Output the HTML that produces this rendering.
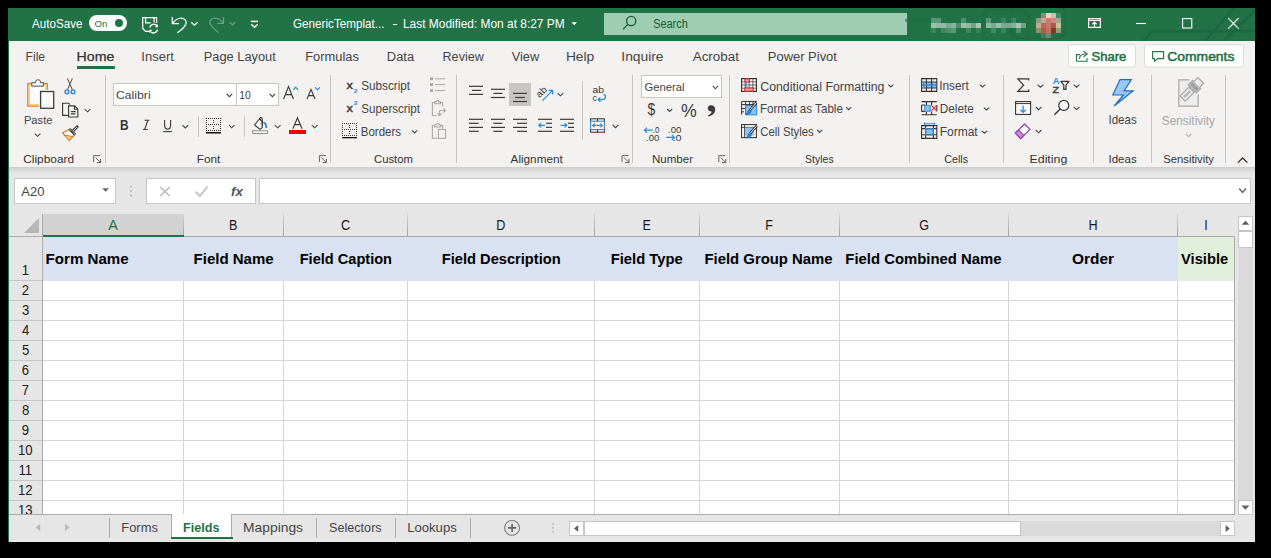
<!DOCTYPE html>
<html><head><meta charset="utf-8"><style>
html,body{margin:0;padding:0;background:#000;overflow:hidden}
svg{display:block}
text{font-family:"Liberation Sans", sans-serif;white-space:pre}
</style></head><body>
<svg width="1271" height="558" viewBox="0 0 1271 558">
<rect x="0" y="0" width="1271" height="558" fill="#000000" />
<rect x="8" y="8" width="1247" height="33" fill="#217346" />
<rect x="8" y="41" width="1247" height="126" fill="#f3f2f1" />
<rect x="8" y="167" width="1247" height="375" fill="#e6e6e6" />
<defs><linearGradient id="sh" x1="0" y1="0" x2="0" y2="1"><stop offset="0" stop-color="#cdcdcd"/><stop offset="1" stop-color="#e6e6e6"/></linearGradient></defs>
<rect x="8" y="167" width="1247" height="6" fill="url(#sh)" />
<rect x="8" y="8" width="1" height="534" fill="#217346" />
<rect x="14" y="178" width="102" height="26" fill="#c6c6c6" />
<rect x="15" y="179" width="100" height="24" fill="#ffffff" />
<rect x="146" y="178" width="110" height="26" fill="#c6c6c6" />
<rect x="147" y="179" width="108" height="24" fill="#ffffff" />
<rect x="259" y="178" width="992" height="26" fill="#c6c6c6" />
<rect x="260" y="179" width="990" height="24" fill="#ffffff" />
<rect x="9" y="214" width="1225" height="22" fill="#e6e6e6" />
<rect x="43" y="214" width="141" height="21" fill="#d2d2d2" />
<defs><linearGradient id="cdiv" x1="0" y1="0" x2="0" y2="1"><stop offset="0" stop-color="#d6d6d6"/><stop offset="1" stop-color="#9e9e9e"/></linearGradient></defs>
<rect x="183" y="214" width="1" height="22" fill="url(#cdiv)" />
<rect x="283" y="214" width="1" height="22" fill="url(#cdiv)" />
<rect x="407" y="214" width="1" height="22" fill="url(#cdiv)" />
<rect x="594" y="214" width="1" height="22" fill="url(#cdiv)" />
<rect x="699" y="214" width="1" height="22" fill="url(#cdiv)" />
<rect x="839" y="214" width="1" height="22" fill="url(#cdiv)" />
<rect x="1008" y="214" width="1" height="22" fill="url(#cdiv)" />
<rect x="1177" y="214" width="1" height="22" fill="url(#cdiv)" />
<rect x="9" y="236" width="1226" height="1" fill="#ababab" />
<rect x="43" y="235" width="141" height="2" fill="#217346" />
<polygon points="24,233 39,233 39,218" fill="#b6b6b6"/>
<clipPath id="gridclip"><rect x="9" y="237" width="33" height="277"/></clipPath>
<rect x="9" y="237" width="33" height="277" fill="#e6e6e6" />
<rect x="42" y="214" width="1" height="300" fill="#ababab" />
<rect x="9" y="280" width="33" height="1" fill="#c6c6c6" />
<rect x="9" y="300" width="33" height="1" fill="#c6c6c6" />
<rect x="9" y="320" width="33" height="1" fill="#c6c6c6" />
<rect x="9" y="340" width="33" height="1" fill="#c6c6c6" />
<rect x="9" y="360" width="33" height="1" fill="#c6c6c6" />
<rect x="9" y="380" width="33" height="1" fill="#c6c6c6" />
<rect x="9" y="400" width="33" height="1" fill="#c6c6c6" />
<rect x="9" y="420" width="33" height="1" fill="#c6c6c6" />
<rect x="9" y="440" width="33" height="1" fill="#c6c6c6" />
<rect x="9" y="460" width="33" height="1" fill="#c6c6c6" />
<rect x="9" y="480" width="33" height="1" fill="#c6c6c6" />
<rect x="9" y="500" width="33" height="1" fill="#c6c6c6" />
<rect x="43" y="237" width="1191" height="277" fill="#ffffff" />
<rect x="43" y="300" width="1191" height="1" fill="#d6d6d6" />
<rect x="43" y="320" width="1191" height="1" fill="#d6d6d6" />
<rect x="43" y="340" width="1191" height="1" fill="#d6d6d6" />
<rect x="43" y="360" width="1191" height="1" fill="#d6d6d6" />
<rect x="43" y="380" width="1191" height="1" fill="#d6d6d6" />
<rect x="43" y="400" width="1191" height="1" fill="#d6d6d6" />
<rect x="43" y="420" width="1191" height="1" fill="#d6d6d6" />
<rect x="43" y="440" width="1191" height="1" fill="#d6d6d6" />
<rect x="43" y="460" width="1191" height="1" fill="#d6d6d6" />
<rect x="43" y="480" width="1191" height="1" fill="#d6d6d6" />
<rect x="43" y="500" width="1191" height="1" fill="#d6d6d6" />
<rect x="183" y="281" width="1" height="233" fill="#d6d6d6" />
<rect x="283" y="281" width="1" height="233" fill="#d6d6d6" />
<rect x="407" y="281" width="1" height="233" fill="#d6d6d6" />
<rect x="594" y="281" width="1" height="233" fill="#d6d6d6" />
<rect x="699" y="281" width="1" height="233" fill="#d6d6d6" />
<rect x="839" y="281" width="1" height="233" fill="#d6d6d6" />
<rect x="1008" y="281" width="1" height="233" fill="#d6d6d6" />
<rect x="1177" y="281" width="1" height="233" fill="#d6d6d6" />
<rect x="43" y="237" width="1135" height="44" fill="#d9e1f2" />
<rect x="1178" y="237" width="56" height="44" fill="#e2efda" />
<rect x="1234" y="236" width="1" height="279" fill="#ababab" />
<rect x="9" y="514" width="1226" height="1" fill="#ababab" />
<rect x="172" y="514" width="59" height="23" fill="#ffffff" />
<rect x="171" y="515" width="1" height="24" fill="#ababab" />
<rect x="231" y="515" width="1" height="24" fill="#ababab" />
<rect x="172" y="514" width="59" height="1" fill="#ffffff" />
<rect x="171" y="537" width="62" height="2" fill="#217346" />
<rect x="109" y="518" width="1" height="20" fill="#ababab" />
<rect x="316" y="518" width="1" height="20" fill="#ababab" />
<rect x="395" y="518" width="1" height="20" fill="#ababab" />
<rect x="470" y="518" width="1" height="20" fill="#ababab" />
<rect x="1238" y="231" width="15" height="270" fill="#dadada" />
<rect x="1238" y="216" width="15" height="15" fill="#c6c6c6" />
<rect x="1239" y="217" width="13" height="13" fill="#ffffff" />
<rect x="1238" y="231" width="15" height="17" fill="#c6c6c6" />
<rect x="1239" y="232" width="13" height="15" fill="#ffffff" />
<rect x="1238" y="500" width="15" height="15" fill="#c6c6c6" />
<rect x="1239" y="501" width="13" height="13" fill="#ffffff" />
<rect x="569" y="521" width="666" height="15" fill="#dadada" />
<rect x="569" y="521" width="15" height="15" fill="#c6c6c6" />
<rect x="570" y="522" width="13" height="13" fill="#ffffff" />
<rect x="584" y="521" width="437" height="15" fill="#c6c6c6" />
<rect x="585" y="522" width="435" height="13" fill="#ffffff" />
<rect x="1220" y="521" width="15" height="15" fill="#c6c6c6" />
<rect x="1221" y="522" width="13" height="13" fill="#ffffff" />
<rect x="105" y="75" width="1" height="88" fill="#c8c6c4" />
<rect x="330" y="75" width="1" height="88" fill="#c8c6c4" />
<rect x="456" y="75" width="1" height="88" fill="#c8c6c4" />
<rect x="632" y="75" width="1" height="88" fill="#c8c6c4" />
<rect x="729" y="75" width="1" height="88" fill="#c8c6c4" />
<rect x="909" y="75" width="1" height="88" fill="#c8c6c4" />
<rect x="1003" y="75" width="1" height="88" fill="#c8c6c4" />
<rect x="1093" y="75" width="1" height="88" fill="#c8c6c4" />
<rect x="1151" y="75" width="1" height="88" fill="#c8c6c4" />
<rect x="1225" y="75" width="1" height="88" fill="#c8c6c4" />
<rect x="604" y="13" width="303" height="22" fill="#9fcdb3" />
<clipPath id="tb"><rect x="8" y="8" width="1247" height="33"/></clipPath>
<g stroke="#1c6a3e" stroke-width="3" fill="none" opacity="0.55" clip-path="url(#tb)"><path d="M905 20.4 H932"/><rect x="1011.5" y="6" width="53.5" height="32" rx="7"/><rect x="983" y="10" width="45" height="36" rx="8"/></g>
<g stroke="#1e6640" stroke-width="2.4" fill="none" clip-path="url(#tb)"><path d="M1142 42 L1152.5 31.2 H1256"/><path d="M1236 6 L1204 42"/><path d="M1257 8 L1223 42"/></g>
<rect x="89" y="15" width="38" height="16" rx="8" fill="#ffffff"/>
<circle cx="119" cy="23" r="4" fill="#217346"/>
<g stroke="#fff" stroke-width="1.25" fill="none" stroke-linejoin="miter"><path d="M149.5 31.4 H145.6 L142.7 28.5 V17.6 H156.6 V23"/><path d="M145.6 17.6 V22.8 H150.6"/><path d="M154.1 17.6 V22.6"/><path d="M149.8 27.6 A4 4 0 0 1 157.2 26.2"/><path d="M157.4 29.6 A4 4 0 0 1 150.0 31.0"/></g><path d="M157.9 24 V27.2 H154.7 Z" fill="#fff"/><path d="M149.3 33 V29.8 H152.5 Z" fill="#fff"/>
<g stroke="#fff" stroke-width="1.25" fill="none"><path d="M172.3 17 V23.6 H178.9"/><path d="M172.8 23.1 C176 18.3 181.5 16.8 184.8 19.6 C188 22.6 185.5 27 177.4 32.8"/><path d="M191.2 22.2 L194.4 25.2 L197.6 22.2"/></g>
<g stroke="#ffffff" stroke-opacity="0.32" stroke-width="1.25" fill="none"><path d="M223.5 17.2 V23.3 H217.2"/><path d="M223 22.8 C219.8 18.3 214.3 16.6 211.2 19.4 C208.2 22.2 209.8 25.8 218.6 32.6"/><path d="M229.6 22.2 L232.5 24.8 L235.4 22.2"/></g>
<g stroke="#fff" stroke-width="1.4" fill="none"><path d="M251 21.4 H258"/><path d="M251.3 24.3 L254.5 27.2 L257.7 24.3"/></g>
<rect x="393" y="24" width="4" height="1" fill="#ffffff" />
<path d="M571.5 22.3 H577 L574.25 25.3 Z" fill="#fff"/>
<g stroke="#125c30" stroke-width="1.3" fill="none"><circle cx="631.2" cy="21" r="4.6"/><path d="M627.9 24.4 L623 29.4"/></g>
<rect x="931" y="18" width="5" height="5" fill="#ffffff" opacity="0.25"/>
<rect x="936" y="18" width="5" height="5" fill="#ffffff" opacity="0.25"/>
<rect x="961" y="18" width="5" height="5" fill="#ffffff" opacity="0.20"/>
<rect x="986" y="18" width="5" height="5" fill="#ffffff" opacity="0.25"/>
<rect x="1001" y="18" width="5" height="5" fill="#ffffff" opacity="0.12"/>
<rect x="1011" y="18" width="5" height="5" fill="#ffffff" opacity="0.15"/>
<rect x="931" y="23" width="5" height="5" fill="#ffffff" opacity="0.55"/>
<rect x="936" y="23" width="5" height="5" fill="#ffffff" opacity="0.50"/>
<rect x="941" y="23" width="5" height="5" fill="#ffffff" opacity="0.50"/>
<rect x="946" y="23" width="5" height="5" fill="#ffffff" opacity="0.40"/>
<rect x="951" y="23" width="5" height="5" fill="#ffffff" opacity="0.45"/>
<rect x="956" y="23" width="5" height="5" fill="#ffffff" opacity="0.20"/>
<rect x="961" y="23" width="5" height="5" fill="#ffffff" opacity="0.55"/>
<rect x="966" y="23" width="5" height="5" fill="#ffffff" opacity="0.50"/>
<rect x="971" y="23" width="5" height="5" fill="#ffffff" opacity="0.35"/>
<rect x="976" y="23" width="5" height="5" fill="#ffffff" opacity="0.60"/>
<rect x="986" y="23" width="5" height="5" fill="#ffffff" opacity="0.50"/>
<rect x="991" y="23" width="5" height="5" fill="#ffffff" opacity="0.40"/>
<rect x="996" y="23" width="5" height="5" fill="#ffffff" opacity="0.55"/>
<rect x="1001" y="23" width="5" height="5" fill="#ffffff" opacity="0.40"/>
<rect x="1006" y="23" width="5" height="5" fill="#ffffff" opacity="0.40"/>
<rect x="1011" y="23" width="5" height="5" fill="#ffffff" opacity="0.45"/>
<rect x="1016" y="23" width="5" height="5" fill="#ffffff" opacity="0.60"/>
<rect x="1021" y="23" width="5" height="5" fill="#ffffff" opacity="0.35"/>
<rect x="931" y="28" width="5" height="5" fill="#ffffff" opacity="0.12"/>
<rect x="941" y="28" width="5" height="5" fill="#ffffff" opacity="0.15"/>
<rect x="946" y="28" width="5" height="5" fill="#ffffff" opacity="0.20"/>
<rect x="951" y="28" width="5" height="5" fill="#ffffff" opacity="0.25"/>
<rect x="966" y="28" width="5" height="5" fill="#ffffff" opacity="0.15"/>
<rect x="976" y="28" width="5" height="5" fill="#ffffff" opacity="0.10"/>
<rect x="991" y="28" width="5" height="5" fill="#ffffff" opacity="0.15"/>
<rect x="1001" y="28" width="5" height="5" fill="#ffffff" opacity="0.12"/>
<rect x="1016" y="28" width="5" height="5" fill="#ffffff" opacity="0.20"/>
<rect x="1041" y="13" width="5" height="5" fill="#8a8a78"/>
<rect x="1046" y="13" width="5" height="5" fill="#e6d6c8"/>
<rect x="1051" y="13" width="5" height="5" fill="#c8c0ae"/>
<rect x="1056" y="13" width="5" height="5" fill="#3f8a62"/>
<rect x="1036" y="18" width="5" height="5" fill="#8b9a88"/>
<rect x="1041" y="18" width="5" height="5" fill="#d4a08a"/>
<rect x="1046" y="18" width="5" height="5" fill="#cf7a6e"/>
<rect x="1051" y="18" width="5" height="5" fill="#d48a7a"/>
<rect x="1056" y="18" width="5" height="5" fill="#9aaa8a"/>
<rect x="1036" y="23" width="5" height="5" fill="#c8a890"/>
<rect x="1041" y="23" width="5" height="5" fill="#b86a50"/>
<rect x="1046" y="23" width="5" height="5" fill="#cc7070"/>
<rect x="1051" y="23" width="5" height="5" fill="#a85a4a"/>
<rect x="1056" y="23" width="5" height="5" fill="#c6c0a0"/>
<rect x="1036" y="28" width="5" height="5" fill="#8a9070"/>
<rect x="1041" y="28" width="5" height="5" fill="#b05a44"/>
<rect x="1046" y="28" width="5" height="5" fill="#c07060"/>
<rect x="1051" y="28" width="5" height="5" fill="#7a3a2a"/>
<rect x="1056" y="28" width="5" height="5" fill="#8aa078"/>
<rect x="1041" y="33" width="5" height="5" fill="#4a7a5a"/>
<rect x="1046" y="33" width="5" height="5" fill="#6a8a70"/>
<rect x="1051" y="33" width="5" height="5" fill="#2e6a48"/>
<g stroke="#fff" stroke-width="1.2" fill="none"><rect x="1088.6" y="18.6" width="11.8" height="8.8"/><path d="M1088.6 20.4 H1100.4"/><path d="M1094.5 22.2 V27.4"/><path d="M1092.4 24.2 L1094.5 22.2 L1096.6 24.2"/></g>
<g stroke="#fff" stroke-width="1.1" fill="none"><path d="M1136 23.5 H1146"/><rect x="1182.6" y="18.6" width="9.2" height="9.4"/><path d="M1228.2 18.2 L1238.6 28.6 M1238.6 18.2 L1228.2 28.6"/></g>
<rect x="77" y="66" width="38" height="3" fill="#217346" />
<rect x="1068.5" y="44.5" width="67" height="22.5" rx="2.5" fill="#fff" stroke="#dddbd9"/>
<rect x="1144.5" y="44.5" width="99" height="22.5" rx="2.5" fill="#fff" stroke="#dddbd9"/>
<g stroke="#217346" stroke-width="1.1" fill="none"><path d="M1080 54.6 H1076.5 V61.2 H1087 V58"/><path d="M1079.5 59 C1079.5 55.5 1082 54 1085.5 54"/><path d="M1083.5 51.2 L1087.3 54 L1083.5 56.8"/></g>
<path d="M1152.6 51.6 H1163.6 V58.6 H1157.6 L1154.6 61.4 V58.6 H1152.6 Z" stroke="#217346" stroke-width="1.1" fill="none" stroke-linejoin="round"/>
<rect x="27.85" y="83.65" width="19.4" height="22.4" fill="#fbfbfb" stroke="#e2760f" stroke-width="1.3"/>
<rect x="29.3" y="85.1" width="16.5" height="19.5" fill="none" stroke="#f7d07a" stroke-width="1.4"/>
<path d="M31.8 86.2 V82.6 H35.3 C35.8 78.8 40.2 78.8 40.7 82.6 H43.4 V86.2 Z" fill="#fff" stroke="#6d6d6d" stroke-width="1.2"/>
<rect x="39" y="89.8" width="16.4" height="20.2" fill="#f3f2f1"/>
<rect x="40.6" y="91.5" width="13.1" height="16.8" fill="#f9f9f9" stroke="#3a3a3a" stroke-width="1.25"/>
<path d="M34.8 133.6 L37.6 136.3 L40.4 133.6" stroke="#444" stroke-width="1.1" fill="none"/>
<g stroke="#555" stroke-width="1.1" fill="none"><path d="M67.4 78.4 L72.3 89.6 M72.4 78.4 L67.5 89.6"/></g><g stroke="#2b7cd3" stroke-width="1.3" fill="none"><circle cx="66.9" cy="91.8" r="1.9"/><circle cx="73" cy="91.8" r="1.9"/></g>
<g stroke="#3a3a3a" stroke-width="1.15" fill="none"><path d="M67.8 115.4 H62.6 V103.2 H68.6 L69.8 104.5"/><path d="M68.6 105.8 H74.6 L77.8 109 V117 H68.6 Z" fill="#f9f9f9"/><path d="M74.4 105.8 V109.2 H77.8"/><path d="M70.8 111.6 H75.6 M70.8 113.8 H75.6"/></g>
<path d="M84.8 109.2 L87.6 111.8 L90.4 109.2" stroke="#444" stroke-width="1.1" fill="none"/>
<path d="M69.6 129.2 L62.6 132.8 L69.2 140.4 L74.4 135.2 Z" fill="#fff" stroke="#e2760f" stroke-width="1.2" stroke-linejoin="round"/><path d="M66.4 136.4 L72.2 135.6 L69.2 139.2 Z" fill="#f8d27a"/><path d="M64.6 135.2 L72.8 136.6" stroke="#e2760f" stroke-width="1"/><path d="M69.4 128.8 L75.2 134.6" stroke="#3a3a3a" stroke-width="2.6"/><path d="M69.6 129 L75 134.4" stroke="#fff" stroke-width="0.8"/><path d="M72.4 131.6 L77.2 126.8" stroke="#3a3a3a" stroke-width="2.8" stroke-linecap="round"/><path d="M72.8 131.2 L76.8 127.2" stroke="#fff" stroke-width="0.9" stroke-linecap="round"/>
<g stroke="#666" stroke-width="1" fill="none"><path d="M93.6 162.1 V155.6 H100.1"/><path d="M95.6 157.6 L100.6 162.6 M96.8 162.6 H100.6 V158.79999999999998"/></g>
<g stroke="#666" stroke-width="1" fill="none"><path d="M319.4 162.1 V155.6 H325.9"/><path d="M321.4 157.6 L326.4 162.6 M322.59999999999997 162.6 H326.4 V158.79999999999998"/></g>
<g stroke="#666" stroke-width="1" fill="none"><path d="M622.0 162.1 V155.6 H628.5"/><path d="M624.0 157.6 L629.0 162.6 M625.2 162.6 H629.0 V158.79999999999998"/></g>
<g stroke="#666" stroke-width="1" fill="none"><path d="M718.8 162.1 V155.6 H725.3"/><path d="M720.8 157.6 L725.8 162.6 M722.0 162.6 H725.8 V158.79999999999998"/></g>
<rect x="113" y="83" width="124" height="23" fill="#c8c6c4" />
<rect x="114" y="84" width="122" height="21" fill="#ffffff" />
<rect x="236" y="83" width="43" height="23" fill="#c8c6c4" />
<rect x="237" y="84" width="41" height="21" fill="#ffffff" />
<path d="M226.6 93.8 L229.39999999999998 96.6 L232.2 93.8" stroke="#444" stroke-width="1.1" fill="none"/>
<path d="M269.6 93.8 L272.4 96.6 L275.2 93.8" stroke="#444" stroke-width="1.1" fill="none"/>
<g stroke="#3b3b3b" stroke-width="1.15" fill="none"><path d="M283.6 99 L288.5 86.6 L293.4 99 M285.4 94.6 H291.6"/><path d="M307 99 L311 89.4 L315 99 M308.5 95.6 H313.5"/></g>
<path d="M293.4 89.8 L295.7 87.2 L298 89.8" stroke="#2b88d8" stroke-width="1.2" fill="none"/>
<path d="M315.2 87.4 L317.5 89.8 L319.8 87.4" stroke="#2b88d8" stroke-width="1.2" fill="none"/>
<g stroke="#3b3b3b" stroke-width="1.1" fill="none"><path d="M144.6 120.3 H149.4 M143 129.5 H147.8 M147.9 120.3 L144.6 129.5"/><path d="M164.6 119.9 V125.6 C164.6 130.4 170.6 130.4 170.6 125.6 V119.9"/><path d="M163.2 131.6 H172"/></g>
<path d="M182.4 125.2 L185.3 128 L188.2 125.2" stroke="#444" stroke-width="1.1" fill="none"/>
<g fill="#3a3a3a"><rect x="206" y="118" width="1" height="1"/><rect x="206" y="124" width="1" height="1"/><rect x="206" y="130" width="1" height="1"/><rect x="208" y="118" width="1" height="1"/><rect x="208" y="124" width="1" height="1"/><rect x="208" y="130" width="1" height="1"/><rect x="210" y="118" width="1" height="1"/><rect x="210" y="124" width="1" height="1"/><rect x="210" y="130" width="1" height="1"/><rect x="212" y="118" width="1" height="1"/><rect x="212" y="124" width="1" height="1"/><rect x="212" y="130" width="1" height="1"/><rect x="214" y="118" width="1" height="1"/><rect x="214" y="124" width="1" height="1"/><rect x="214" y="130" width="1" height="1"/><rect x="216" y="118" width="1" height="1"/><rect x="216" y="124" width="1" height="1"/><rect x="216" y="130" width="1" height="1"/><rect x="218" y="118" width="1" height="1"/><rect x="218" y="124" width="1" height="1"/><rect x="218" y="130" width="1" height="1"/><rect x="220" y="118" width="1" height="1"/><rect x="220" y="124" width="1" height="1"/><rect x="220" y="130" width="1" height="1"/><rect x="206" y="120" width="1" height="1"/><rect x="213" y="120" width="1" height="1"/><rect x="220" y="120" width="1" height="1"/><rect x="206" y="122" width="1" height="1"/><rect x="213" y="122" width="1" height="1"/><rect x="220" y="122" width="1" height="1"/><rect x="206" y="126" width="1" height="1"/><rect x="213" y="126" width="1" height="1"/><rect x="220" y="126" width="1" height="1"/><rect x="206" y="128" width="1" height="1"/><rect x="213" y="128" width="1" height="1"/><rect x="220" y="128" width="1" height="1"/></g>
<rect x="206" y="132" width="15" height="1.5" fill="#111"/>
<path d="M229 125.2 L231.7 127.8 L234.4 125.2" stroke="#444" stroke-width="1.1" fill="none"/>
<rect x="198" y="116" width="1" height="21" fill="#c8c6c4" />
<rect x="244" y="116" width="1" height="21" fill="#c8c6c4" />
<path d="M254.6 125 L259.4 119 L262.2 121.4 V127.6 L260 129.4 Z" fill="#fafafa" stroke="#333" stroke-width="1.1" stroke-linejoin="round"/><path d="M259.4 119 C260.2 116.8 262.2 117.4 262.2 119.6 V125.2" fill="none" stroke="#333" stroke-width="1.1"/><path d="M263.4 122.6 C265.6 122.8 266.8 125.2 266 128" fill="none" stroke="#1f6fc4" stroke-width="1.5"/><rect x="252.7" y="130.8" width="14.8" height="2.6" fill="#fff" stroke="#8a8a8a" stroke-width="1"/>
<path d="M274.8 125.2 L277.70000000000005 127.8 L280.6 125.2" stroke="#444" stroke-width="1.1" fill="none"/>
<path d="M292.8 128.8 L297.45 118 L302.1 128.8 M294.6 124.6 H300.3" stroke="#3b3b3b" stroke-width="1.15" fill="none"/>
<rect x="289" y="130" width="17" height="4" fill="#ee0000" />
<path d="M311.8 125.2 L314.6 127.8 L317.4 125.2" stroke="#444" stroke-width="1.1" fill="none"/>
<g fill="#3a3a3a"><rect x="342" y="123" width="1" height="1"/><rect x="342" y="129" width="1" height="1"/><rect x="342" y="135" width="1" height="1"/><rect x="344" y="123" width="1" height="1"/><rect x="344" y="129" width="1" height="1"/><rect x="344" y="135" width="1" height="1"/><rect x="346" y="123" width="1" height="1"/><rect x="346" y="129" width="1" height="1"/><rect x="346" y="135" width="1" height="1"/><rect x="348" y="123" width="1" height="1"/><rect x="348" y="129" width="1" height="1"/><rect x="348" y="135" width="1" height="1"/><rect x="350" y="123" width="1" height="1"/><rect x="350" y="129" width="1" height="1"/><rect x="350" y="135" width="1" height="1"/><rect x="352" y="123" width="1" height="1"/><rect x="352" y="129" width="1" height="1"/><rect x="352" y="135" width="1" height="1"/><rect x="354" y="123" width="1" height="1"/><rect x="354" y="129" width="1" height="1"/><rect x="354" y="135" width="1" height="1"/><rect x="356" y="123" width="1" height="1"/><rect x="356" y="129" width="1" height="1"/><rect x="356" y="135" width="1" height="1"/><rect x="342" y="125" width="1" height="1"/><rect x="349" y="125" width="1" height="1"/><rect x="356" y="125" width="1" height="1"/><rect x="342" y="127" width="1" height="1"/><rect x="349" y="127" width="1" height="1"/><rect x="356" y="127" width="1" height="1"/><rect x="342" y="131" width="1" height="1"/><rect x="349" y="131" width="1" height="1"/><rect x="356" y="131" width="1" height="1"/><rect x="342" y="133" width="1" height="1"/><rect x="349" y="133" width="1" height="1"/><rect x="356" y="133" width="1" height="1"/></g>
<rect x="342" y="137" width="15" height="1.3" fill="#111"/>
<path d="M412 130.4 L414.6 133 L417.2 130.4" stroke="#444" stroke-width="1.1" fill="none"/>
<g fill="#a8a8a8"><rect x="430" y="77.4" width="3" height="2.8"/><rect x="430" y="83.2" width="3" height="2.8"/><rect x="430" y="89.2" width="3" height="2.8"/></g>
<g stroke="#a8a8a8" stroke-width="1"><path d="M435 78.8 H445.2 M435 84.6 H445.2 M435 90.6 H445.2"/></g>
<g stroke="#a8a8a8" stroke-width="1.05" fill="none"><path d="M436.6 115.4 H432.4 V102.4 H434.8 M440.4 102.4 H442.6 V106.4"/><path d="M434.8 103.8 V101.6 H436.6 C436.8 99.8 438.6 99.8 438.8 101.6 H440.4 V103.8 Z"/><path d="M439.6 110.4 H445.6 M443.4 108.2 L445.6 110.4 L443.4 112.6 M439.6 110.4 V115.4 M437.6 113.4 L439.6 115.6 L441.6 113.4"/></g>
<g stroke="#a8a8a8" stroke-width="1.05" fill="none"><path d="M437.6 138.2 H432.4 V125.6 H434.8 M440.4 125.6 H442.6 V128.6"/><path d="M434.8 127 V124.8 H436.6 C436.8 123 438.6 123 438.8 124.8 H440.4 V127 Z"/><rect x="438.4" y="129.4" width="7.2" height="9"/></g>
<rect x="509" y="83" width="22" height="23" fill="#c8c6c4" />
<rect x="469" y="85.70" width="14" height="1.2" fill="#3b3b3b"/>
<rect x="472" y="89.80" width="9" height="1.2" fill="#3b3b3b"/>
<rect x="469" y="93.80" width="14" height="1.2" fill="#3b3b3b"/>
<rect x="491" y="88.70" width="14" height="1.2" fill="#3b3b3b"/>
<rect x="493.5" y="92.80" width="9.0" height="1.2" fill="#3b3b3b"/>
<rect x="491" y="96.90" width="14" height="1.2" fill="#3b3b3b"/>
<rect x="513" y="92.80" width="14" height="1.2" fill="#3b3b3b"/>
<rect x="515.2" y="96.90" width="9.599999999999909" height="1.2" fill="#3b3b3b"/>
<rect x="513" y="100.90" width="14" height="1.2" fill="#3b3b3b"/>
<text x="0" y="0" font-size="9.6" fill="#3b3b3b" transform="translate(539.6 98.2) rotate(-45)" textLength="11.4" lengthAdjust="spacingAndGlyphs">ab</text>
<g stroke="#2b88d8" stroke-width="1.2" fill="none"><path d="M542.4 100.6 L552.6 90.4 M548.6 90.4 H552.6 V94.4"/></g>
<path d="M557.6 93.2 L560.4000000000001 95.8 L563.2 93.2" stroke="#444" stroke-width="1.1" fill="none"/>
<rect x="582" y="81" width="1" height="59" fill="#c8c6c4" />
<text x="592.4" y="93.2" font-size="9" fill="#3b3b3b" textLength="11.6" lengthAdjust="spacingAndGlyphs">ab</text>
<text x="592.4" y="101.2" font-size="9" fill="#3b3b3b" textLength="4.6" lengthAdjust="spacingAndGlyphs">c</text>
<g stroke="#2b88d8" stroke-width="1.25" fill="none"><path d="M603.6 94.4 C606.6 95.6 606 99.6 602.4 99.6 H598.2 M600.4 97.4 L598.2 99.6 L600.4 101.8"/></g>
<rect x="469" y="118.70" width="14" height="1.2" fill="#3b3b3b"/>
<rect x="469" y="122.70" width="9.699999999999989" height="1.2" fill="#3b3b3b"/>
<rect x="469" y="126.80" width="14" height="1.2" fill="#3b3b3b"/>
<rect x="469" y="130.70" width="9.699999999999989" height="1.2" fill="#3b3b3b"/>
<rect x="491" y="118.70" width="14" height="1.2" fill="#3b3b3b"/>
<rect x="493.4" y="122.70" width="9.0" height="1.2" fill="#3b3b3b"/>
<rect x="491" y="126.80" width="14" height="1.2" fill="#3b3b3b"/>
<rect x="493.4" y="130.70" width="9.0" height="1.2" fill="#3b3b3b"/>
<rect x="513" y="118.70" width="14" height="1.2" fill="#3b3b3b"/>
<rect x="517.1" y="122.70" width="9.899999999999977" height="1.2" fill="#3b3b3b"/>
<rect x="513" y="126.80" width="14" height="1.2" fill="#3b3b3b"/>
<rect x="517.1" y="130.70" width="9.899999999999977" height="1.2" fill="#3b3b3b"/>
<rect x="538" y="118.70" width="14" height="1.2" fill="#3b3b3b"/>
<rect x="546" y="122.70" width="6" height="1.2" fill="#3b3b3b"/>
<rect x="546" y="126.80" width="6" height="1.2" fill="#3b3b3b"/>
<rect x="538" y="130.70" width="14" height="1.2" fill="#3b3b3b"/>
<rect x="560" y="118.70" width="14" height="1.2" fill="#3b3b3b"/>
<rect x="568" y="122.70" width="6" height="1.2" fill="#3b3b3b"/>
<rect x="568" y="126.80" width="6" height="1.2" fill="#3b3b3b"/>
<rect x="560" y="130.70" width="14" height="1.2" fill="#3b3b3b"/>
<g stroke="#2b88d8" stroke-width="1.2" fill="none"><path d="M545 125.3 H538.8 M541 123.1 L538.8 125.3 L541 127.5"/><path d="M560.6 125.3 H566.8 M564.6 123.1 L566.8 125.3 L564.6 127.5"/></g>
<rect x="590.6" y="118.8" width="13.8" height="13.4" fill="#fff" stroke="#3b3b3b" stroke-width="1.1"/>
<rect x="590.6" y="121.2" width="13.8" height="8.4" fill="#fff" stroke="#2b88d8" stroke-width="1.1"/>
<path d="M597.5 118.8 V121.2 M597.5 129.6 V132.2" stroke="#3b3b3b" stroke-width="1.1"/>
<g stroke="#2b88d8" stroke-width="1.1" fill="none"><path d="M592.6 125.4 H602.4 M594.6 123.4 L592.6 125.4 L594.6 127.4 M600.4 123.4 L602.4 125.4 L600.4 127.4"/></g>
<path d="M612.6 124.9 L615.5 127.7 L618.4 124.9" stroke="#444" stroke-width="1.1" fill="none"/>
<rect x="641" y="75" width="81" height="23" fill="#c8c6c4" />
<rect x="642" y="76" width="79" height="21" fill="#ffffff" />
<path d="M712.8 85.9 L715.4 88.8 L718 85.9" stroke="#444" stroke-width="1.1" fill="none"/>
<path d="M667 109 L669.6 111.5 L672.2 109" stroke="#444" stroke-width="1.1" fill="none"/>
<path d="M709.6 105.6 C712.2 104.6 715.2 106 715.2 109.4 C715.2 112.8 712.6 115.4 708.4 116.4 L708 115.4 C710.6 114.4 711.6 113 711.6 111.6 C709.4 111.6 707.8 110.4 707.8 108.6 C707.8 107.2 708.4 106.2 709.6 105.6 Z" fill="#3b3b3b"/>
<g stroke="#2b88d8" stroke-width="1.2" fill="none"><path d="M652.6 130.2 H644.4 M647 127.6 L644.4 130.2 L647 132.8"/><path d="M666.2 137.4 H674.4 M671.8 134.8 L674.4 137.4 L671.8 140"/></g>
<rect x="741.6" y="78.6" width="14.8" height="12.8" fill="#fff" stroke="#333" stroke-width="1.2"/>
<path d="M745.2 78.6 V91.4 M749.2 78.6 V91.4 M752.9 78.6 V91.4 M741.6 81.8 H756.4 M741.6 85 H756.4 M741.6 88.2 H756.4" stroke="#555" stroke-width="0.9"/>
<rect x="745" y="78.9" width="4.4" height="3.2" fill="#f4a0a8" stroke="#e02020" stroke-width="1"/>
<rect x="745" y="82.2" width="1.6" height="6" fill="#2b88d8"/>
<rect x="744.8" y="88" width="8.4" height="3.2" fill="#f4a0a8" stroke="#e02020" stroke-width="1"/>
<path d="M888.3 84.6 L890.8 86.9 L893.3 84.6" stroke="#444" stroke-width="1.1" fill="none"/>
<g stroke="#333" stroke-width="1" fill="none"><path d="M741.6 114.6 V101.4 H756.4 V106"/><path d="M741.6 104.6 H756.4 M741.6 108.6 H745 M741.6 111.8 H744 M745.6 101.4 V106 M749.6 101.4 V106 M753 101.4 V106"/></g>
<rect x="745.6" y="105.6" width="11" height="9.2" fill="#8cc0ee" stroke="#2b88d8" stroke-width="1"/>
<path d="M756.6 102.4 L749.8 110.2" stroke="#333" stroke-width="2.4"/><path d="M756.6 102.4 L749.8 110.2" stroke="#fff" stroke-width="0.9"/>
<path d="M749.4 109.6 C747.6 111.2 747.2 113 745.6 114.6 C748.8 114.4 751 113 751.2 111.4 Z" fill="#2b88d8" stroke="#1f6fc4" stroke-width="0.8"/>
<path d="M846.1 107.2 L848.7 109.7 L851.3 107.2" stroke="#444" stroke-width="1.1" fill="none"/>
<rect x="741.6" y="124.6" width="14.8" height="13" fill="#fff" stroke="#333" stroke-width="1.1"/>
<path d="M741.6 127.4 H756.4 M744.6 124.6 V137.6" stroke="#333" stroke-width="0.9"/>
<rect x="745" y="127.6" width="9" height="8" fill="#8cc0ee"/>
<path d="M757 125.6 L750 133.6" stroke="#333" stroke-width="2.4"/><path d="M757 125.6 L750 133.6" stroke="#fff" stroke-width="0.9"/>
<path d="M749.6 133 C747.8 134.6 747.4 136.4 745.8 138 C749 137.8 751.2 136.4 751.4 134.8 Z" fill="#2b88d8" stroke="#1f6fc4" stroke-width="0.8"/>
<path d="M817.2 129.8 L819.7 132.4 L822.2 129.8" stroke="#444" stroke-width="1.1" fill="none"/>
<rect x="926.4" y="82" width="10.4" height="6" fill="#8cc0ee"/>
<path d="M921.6 78.6 H936.8 V91.4 H921.6 Z M926.4 78.6 V91.4 M931.6 78.6 V91.4 M921.6 82 H936.8 M921.6 88 H936.8 " stroke="#333" stroke-width="1.1" fill="none"/>
<path d="M936.4 85 H922.6 M925.6 82 L922.4 85 L925.6 88" stroke="#2b88d8" stroke-width="1.3" fill="none"/>
<path d="M979.8 84.6 L982.5 87 L985.2 84.6" stroke="#444" stroke-width="1.1" fill="none"/>
<path d="M921.6 101.6 H936.8 M921.6 114.8 H936.8 M921.6 105 V111.4 M936.8 105 V111.4 M926.4 101.6 V105 M931.6 101.6 V105 M926.4 111.4 V114.8 M931.6 111.4 V114.8 M921.6 105 H925 M921.6 111.4 H925" stroke="#333" stroke-width="1.1" fill="none"/>
<rect x="924.8" y="105.4" width="5.4" height="5.8" fill="#8cc0ee" stroke="#2b88d8" stroke-width="1"/>
<path d="M931.4 105.4 L936.6 110.8 M936.6 105.4 L931.4 110.8" stroke="#e83030" stroke-width="1.2"/>
<path d="M983.8 107.6 L986.5 110 L989.2 107.6" stroke="#444" stroke-width="1.1" fill="none"/>
<rect x="925.6" y="128.6" width="7.8" height="6.2" fill="#8cc0ee"/>
<path d="M921.6 125.6 H936.8 V138.4 H921.6 Z M925.6 125.6 V138.4 M933.4 125.6 V138.4 M921.6 128.6 H936.8 M921.6 134.8 H936.8 " stroke="#333" stroke-width="1.1" fill="none"/>
<rect x="925.6" y="128.6" width="7.8" height="6.2" fill="none" stroke="#2b88d8" stroke-width="1.1"/>
<path d="M924.6 123.8 H934.4 M924.6 122.4 V125.2 M934.4 122.4 V125.2" stroke="#2b88d8" stroke-width="1"/>
<path d="M981.8 130.8 L984.5 133.2 L987.2 130.8" stroke="#444" stroke-width="1.1" fill="none"/>
<path d="M1028.8 80.6 V78.8 H1017.8 L1023.6 85.2 L1017.8 91.4 H1028.8 V89.6" stroke="#333" stroke-width="1.2" fill="none" stroke-linejoin="miter"/>
<path d="M1037.6 84.6 L1040.5 87.2 L1043.4 84.6" stroke="#444" stroke-width="1.1" fill="none"/>
<path d="M1060.8 81.4 H1069 L1066 85.2 V89.4 H1063.8 V85.2 Z" stroke="#333" stroke-width="1.2" fill="none" stroke-linejoin="round"/>
<path d="M1073.6 84.6 L1076.5 87.2 L1079.4 84.6" stroke="#444" stroke-width="1.1" fill="none"/>
<rect x="1015.6" y="101.6" width="15" height="12.8" fill="#fff" stroke="#333" stroke-width="1.1"/>
<path d="M1015.6 103.6 H1030.6" stroke="#333" stroke-width="1"/>
<path d="M1023.1 105.4 V112.4 M1020.4 109.8 L1023.1 112.4 L1025.8 109.8" stroke="#2b88d8" stroke-width="1.3" fill="none"/>
<path d="M1035.8 106.8 L1038.6 109.6 L1041.4 106.8" stroke="#444" stroke-width="1.1" fill="none"/>
<circle cx="1063.8" cy="105.4" r="5" fill="#fafafa" stroke="#333" stroke-width="1.2"/>
<path d="M1060.2 109 L1054.4 114.8" stroke="#333" stroke-width="1.3"/>
<path d="M1073.6 106.8 L1076.5 109.6 L1079.4 106.8" stroke="#444" stroke-width="1.1" fill="none"/>
<path d="M1015.4 133 L1024.6 124 L1030 129.4 L1020.6 138.6 Z" fill="#fff" stroke="#9b3fb5" stroke-width="1.3" stroke-linejoin="round"/>
<path d="M1015.4 133 L1018.6 129.8 L1023.8 135.4 L1020.6 138.6 Z" fill="#c88ad8" stroke="#9b3fb5" stroke-width="1.1"/>
<path d="M1035.8 130 L1038.6 132.8 L1041.4 130" stroke="#444" stroke-width="1.1" fill="none"/>
<path d="M1120 79.6 H1131.4 L1124 90.8 H1133.2 L1114.2 106 L1123.4 95 H1112.8 Z" fill="#9bc8f2" stroke="#1f6fc4" stroke-width="1.2" stroke-linejoin="miter"/>
<path d="M1189.4 79.8 H1178.8 V106.2 H1198.2 V94.2" fill="#ececec" stroke="#a8a8a8" stroke-width="1.2"/>
<g transform="translate(1192.6 88.6) rotate(-45)" stroke="#a8a8a8" stroke-width="1.2" fill="#ececec"><rect x="-14" y="-3.6" width="12.4" height="7.2"/><rect x="-12" y="-1.2" width="8.6" height="2.4" fill="#b4b4b4" stroke="none"/><rect x="-0.4" y="-5.8" width="6.2" height="11.6" fill="#c4c4c4"/><rect x="1" y="-4.6" width="3.4" height="9.2" fill="#a0a0a0" stroke="none"/><path d="M5.8 -4 H11.6 V4 H5.8" fill="#ececec"/></g>
<path d="M1185.8 133.8 L1188.5 136.8 L1191.2 133.8" stroke="#a8a8a8" stroke-width="1.1" fill="none"/>
<path d="M1237.8 162.6 L1242.6 158 L1247.4 162.6" stroke="#333" stroke-width="1.3" fill="none"/>
<path d="M102.2 188.2 H109 L105.6 191.8 Z" fill="#666"/>
<g fill="#a6a6a6"><rect x="130.2" y="185.8" width="1.5" height="1.5"/><rect x="130.2" y="190.3" width="1.5" height="1.5"/><rect x="130.2" y="194.8" width="1.5" height="1.5"/></g>
<path d="M160.2 187 L169.8 196 M169.8 187 L160.2 196" stroke="#b4b4b4" stroke-width="1.3"/>
<path d="M195.6 191.8 L199.8 196 L207.6 186.6" stroke="#c8c8c8" stroke-width="2" fill="none"/>
<text x="231" y="195.6" font-family="Liberation Serif" font-style="italic" font-weight="bold" font-size="13" fill="#555" textLength="11.8" lengthAdjust="spacingAndGlyphs">fx</text>
<path d="M1239.2 188.4 L1242.6 192.4 L1246 188.4" stroke="#666" stroke-width="1.5" fill="none"/>
<path d="M40.2 524 V531 L35.8 527.5 Z" fill="#b4b4b4"/><path d="M65.2 524 V531 L69.4 527.5 Z" fill="#b4b4b4"/>
<circle cx="512.1" cy="527.9" r="7.4" fill="none" stroke="#7a7a7a" stroke-width="1.1"/>
<path d="M508 527.9 H516.2 M512.1 523.8 V532" stroke="#606060" stroke-width="1.6"/>
<g fill="#acacac"><rect x="552.3" y="523.3" width="1.5" height="1.5"/><rect x="552.3" y="527.2" width="1.5" height="1.5"/><rect x="552.3" y="531.2" width="1.5" height="1.5"/></g>
<path d="M578.2 525 V532 L574 528.5 Z" fill="#606060"/>
<path d="M1225.6 525 V532 L1229.8 528.5 Z" fill="#606060"/>
<path d="M1241.6 224.8 H1249.4 L1245.5 220.8 Z" fill="#606060"/>
<path d="M1241.4 505.6 H1249.4 L1245.4 509.8 Z" fill="#606060"/>
<text x="32.10" y="28.00" font-size="12.16" fill="#ffffff" textLength="50.37" lengthAdjust="spacingAndGlyphs">AutoSave</text>
<text x="293.05" y="28.00" font-size="12.16" fill="#ffffff" textLength="91.40" lengthAdjust="spacingAndGlyphs">GenericTemplat...</text>
<text x="402.97" y="28.00" font-size="12.16" fill="#ffffff" textLength="161.74" lengthAdjust="spacingAndGlyphs">Last Modified: Mon at 8:27 PM</text>
<text x="653.16" y="27.80" font-size="12.30" fill="#125c30" textLength="34.66" lengthAdjust="spacingAndGlyphs">Search</text>
<text x="25.55" y="61.10" font-size="12.30" fill="#444444" textLength="19.54" lengthAdjust="spacingAndGlyphs">File</text>
<text x="141.39" y="61.10" font-size="12.30" fill="#444444" textLength="32.47" lengthAdjust="spacingAndGlyphs">Insert</text>
<text x="203.80" y="61.10" font-size="12.30" fill="#444444" textLength="71.96" lengthAdjust="spacingAndGlyphs">Page Layout</text>
<text x="305.19" y="61.10" font-size="12.30" fill="#444444" textLength="53.71" lengthAdjust="spacingAndGlyphs">Formulas</text>
<text x="386.89" y="61.10" font-size="12.30" fill="#444444" textLength="27.23" lengthAdjust="spacingAndGlyphs">Data</text>
<text x="442.52" y="61.10" font-size="12.30" fill="#444444" textLength="41.33" lengthAdjust="spacingAndGlyphs">Review</text>
<text x="511.70" y="61.10" font-size="12.30" fill="#444444" textLength="27.54" lengthAdjust="spacingAndGlyphs">View</text>
<text x="565.92" y="61.10" font-size="12.30" fill="#444444" textLength="28.33" lengthAdjust="spacingAndGlyphs">Help</text>
<text x="621.32" y="61.10" font-size="12.30" fill="#444444" textLength="42.24" lengthAdjust="spacingAndGlyphs">Inquire</text>
<text x="692.70" y="61.10" font-size="12.30" fill="#444444" textLength="46.25" lengthAdjust="spacingAndGlyphs">Acrobat</text>
<text x="767.79" y="61.10" font-size="12.30" fill="#444444" textLength="69.17" lengthAdjust="spacingAndGlyphs">Power Pivot</text>
<text x="76.59" y="61.10" font-size="12.30" fill="#333333" stroke="#333333" stroke-width="0.25" textLength="37.78" lengthAdjust="spacingAndGlyphs">Home</text>
<text x="23.93" y="123.60" font-size="10.60" fill="#444" textLength="28.52" lengthAdjust="spacingAndGlyphs">Paste</text>
<text x="23.24" y="162.90" font-size="11.16" fill="#333333" textLength="50.82" lengthAdjust="spacingAndGlyphs">Clipboard</text>
<text x="115.93" y="98.90" font-size="11.59" fill="#444" textLength="34.68" lengthAdjust="spacingAndGlyphs">Calibri</text>
<text x="239.25" y="98.90" font-size="11.59" fill="#444" textLength="11.50" lengthAdjust="spacingAndGlyphs">10</text>
<text x="196.78" y="162.90" font-size="11.16" fill="#333333" textLength="23.58" lengthAdjust="spacingAndGlyphs">Font</text>
<text x="361.33" y="89.90" font-size="11.88" fill="#444" textLength="48.73" lengthAdjust="spacingAndGlyphs">Subscript</text>
<text x="361.34" y="112.70" font-size="12.59" fill="#444" textLength="58.62" lengthAdjust="spacingAndGlyphs">Superscript</text>
<text x="360.80" y="135.80" font-size="12.59" fill="#444" textLength="40.26" lengthAdjust="spacingAndGlyphs">Borders</text>
<text x="374.07" y="162.90" font-size="11.16" fill="#333333" textLength="38.81" lengthAdjust="spacingAndGlyphs">Custom</text>
<text x="510.60" y="162.90" font-size="11.16" fill="#333333" textLength="52.06" lengthAdjust="spacingAndGlyphs">Alignment</text>
<text x="644.57" y="91.00" font-size="11.45" fill="#444" textLength="40.07" lengthAdjust="spacingAndGlyphs">General</text>
<text x="652.00" y="162.90" font-size="11.16" fill="#333333" textLength="41.06" lengthAdjust="spacingAndGlyphs">Number</text>
<text x="760.22" y="90.50" font-size="12.44" fill="#444" textLength="124.17" lengthAdjust="spacingAndGlyphs">Conditional Formatting</text>
<text x="759.90" y="113.40" font-size="12.59" fill="#444" textLength="82.97" lengthAdjust="spacingAndGlyphs">Format as Table</text>
<text x="760.27" y="136.20" font-size="12.44" fill="#444" textLength="53.48" lengthAdjust="spacingAndGlyphs">Cell Styles</text>
<text x="805.07" y="162.90" font-size="11.16" fill="#333333" textLength="28.66" lengthAdjust="spacingAndGlyphs">Styles</text>
<text x="939.17" y="90.00" font-size="12.30" fill="#444" textLength="29.69" lengthAdjust="spacingAndGlyphs">Insert</text>
<text x="939.78" y="113.20" font-size="12.44" fill="#444" textLength="34.00" lengthAdjust="spacingAndGlyphs">Delete</text>
<text x="939.77" y="136.30" font-size="12.44" fill="#444" textLength="37.89" lengthAdjust="spacingAndGlyphs">Format</text>
<text x="944.30" y="162.90" font-size="11.16" fill="#333333" textLength="23.73" lengthAdjust="spacingAndGlyphs">Cells</text>
<text x="1029.54" y="162.90" font-size="11.16" fill="#333333" textLength="37.76" lengthAdjust="spacingAndGlyphs">Editing</text>
<text x="1108.50" y="123.80" font-size="12.59" fill="#444" textLength="28.16" lengthAdjust="spacingAndGlyphs">Ideas</text>
<text x="1108.50" y="162.90" font-size="11.16" fill="#333333" textLength="28.16" lengthAdjust="spacingAndGlyphs">Ideas</text>
<text x="1161.83" y="124.60" font-size="13.44" fill="#a6a6a6" textLength="53.17" lengthAdjust="spacingAndGlyphs">Sensitivity</text>
<text x="1163.15" y="162.90" font-size="11.16" fill="#333333" textLength="50.85" lengthAdjust="spacingAndGlyphs">Sensitivity</text>
<text x="21.30" y="196.00" font-size="12.59" fill="#444" textLength="23.12" lengthAdjust="spacingAndGlyphs">A20</text>
<text x="108.20" y="229.90" font-size="15.36" fill="#217346" textLength="9.63" lengthAdjust="spacingAndGlyphs">A</text>
<text x="229.07" y="229.90" font-size="15.36" fill="#1a1a1a" textLength="8.40" lengthAdjust="spacingAndGlyphs">B</text>
<text x="340.88" y="229.90" font-size="15.36" fill="#1a1a1a" textLength="9.10" lengthAdjust="spacingAndGlyphs">C</text>
<text x="496.18" y="229.90" font-size="15.36" fill="#1a1a1a" textLength="9.10" lengthAdjust="spacingAndGlyphs">D</text>
<text x="642.57" y="229.90" font-size="15.36" fill="#1a1a1a" textLength="8.40" lengthAdjust="spacingAndGlyphs">E</text>
<text x="765.37" y="229.90" font-size="15.36" fill="#1a1a1a" textLength="7.69" lengthAdjust="spacingAndGlyphs">F</text>
<text x="919.28" y="229.90" font-size="15.36" fill="#1a1a1a" textLength="9.80" lengthAdjust="spacingAndGlyphs">G</text>
<text x="1088.47" y="229.90" font-size="15.36" fill="#1a1a1a" textLength="9.10" lengthAdjust="spacingAndGlyphs">H</text>
<text x="1204.33" y="229.90" font-size="15.36" fill="#1a1a1a" textLength="3.50" lengthAdjust="spacingAndGlyphs">I</text>
<text x="45.56" y="263.70" font-size="15.00" fill="#000000" font-weight="bold" textLength="83.12" lengthAdjust="spacingAndGlyphs">Form Name</text>
<text x="193.56" y="263.70" font-size="15.00" fill="#000000" font-weight="bold" textLength="80.11" lengthAdjust="spacingAndGlyphs">Field Name</text>
<text x="299.69" y="263.70" font-size="15.00" fill="#000000" font-weight="bold" textLength="92.32" lengthAdjust="spacingAndGlyphs">Field Caption</text>
<text x="441.78" y="263.70" font-size="15.00" fill="#000000" font-weight="bold" textLength="118.92" lengthAdjust="spacingAndGlyphs">Field Description</text>
<text x="610.67" y="263.70" font-size="15.00" fill="#000000" font-weight="bold" textLength="72.09" lengthAdjust="spacingAndGlyphs">Field Type</text>
<text x="704.47" y="263.70" font-size="15.00" fill="#000000" font-weight="bold" textLength="128.10" lengthAdjust="spacingAndGlyphs">Field Group Name</text>
<text x="845.37" y="263.70" font-size="15.00" fill="#000000" font-weight="bold" textLength="156.20" lengthAdjust="spacingAndGlyphs">Field Combined Name</text>
<text x="1072.02" y="263.70" font-size="15.00" fill="#000000" font-weight="bold" textLength="42.00" lengthAdjust="spacingAndGlyphs">Order</text>
<text x="1181.10" y="263.70" font-size="15.00" fill="#000000" font-weight="bold" textLength="47.07" lengthAdjust="spacingAndGlyphs">Visible</text>
<text x="121.29" y="531.80" font-size="11.88" fill="#444" textLength="36.61" lengthAdjust="spacingAndGlyphs">Forms</text>
<text x="183.01" y="531.90" font-size="13.30" fill="#217346" font-weight="bold" textLength="36.40" lengthAdjust="spacingAndGlyphs">Fields</text>
<text x="243.02" y="531.80" font-size="11.88" fill="#444" textLength="60.01" lengthAdjust="spacingAndGlyphs">Mappings</text>
<text x="329.00" y="531.80" font-size="11.88" fill="#444" textLength="52.69" lengthAdjust="spacingAndGlyphs">Selectors</text>
<text x="407.28" y="531.80" font-size="11.88" fill="#444" textLength="49.43" lengthAdjust="spacingAndGlyphs">Lookups</text>
<text x="21.70" y="274.90" font-size="14.93" fill="#1a1a1a" clip-path="url(#gridclip)" textLength="7.31" lengthAdjust="spacingAndGlyphs">1</text>
<text x="21.80" y="295.30" font-size="14.93" fill="#1a1a1a" clip-path="url(#gridclip)" textLength="7.31" lengthAdjust="spacingAndGlyphs">2</text>
<text x="21.91" y="315.30" font-size="14.93" fill="#1a1a1a" clip-path="url(#gridclip)" textLength="7.31" lengthAdjust="spacingAndGlyphs">3</text>
<text x="21.91" y="335.30" font-size="14.93" fill="#1a1a1a" clip-path="url(#gridclip)" textLength="7.31" lengthAdjust="spacingAndGlyphs">4</text>
<text x="21.91" y="355.30" font-size="14.93" fill="#1a1a1a" clip-path="url(#gridclip)" textLength="7.31" lengthAdjust="spacingAndGlyphs">5</text>
<text x="21.80" y="375.30" font-size="14.93" fill="#1a1a1a" clip-path="url(#gridclip)" textLength="7.31" lengthAdjust="spacingAndGlyphs">6</text>
<text x="21.80" y="395.30" font-size="14.93" fill="#1a1a1a" clip-path="url(#gridclip)" textLength="7.31" lengthAdjust="spacingAndGlyphs">7</text>
<text x="21.91" y="415.30" font-size="14.93" fill="#1a1a1a" clip-path="url(#gridclip)" textLength="7.31" lengthAdjust="spacingAndGlyphs">8</text>
<text x="21.80" y="435.30" font-size="14.93" fill="#1a1a1a" clip-path="url(#gridclip)" textLength="7.31" lengthAdjust="spacingAndGlyphs">9</text>
<text x="17.94" y="455.30" font-size="14.93" fill="#1a1a1a" clip-path="url(#gridclip)" textLength="14.62" lengthAdjust="spacingAndGlyphs">10</text>
<text x="18.53" y="475.30" font-size="14.93" fill="#1a1a1a" clip-path="url(#gridclip)" textLength="13.64" lengthAdjust="spacingAndGlyphs">11</text>
<text x="18.05" y="495.30" font-size="14.93" fill="#1a1a1a" clip-path="url(#gridclip)" textLength="14.62" lengthAdjust="spacingAndGlyphs">12</text>
<text x="18.05" y="515.30" font-size="14.93" fill="#1a1a1a" clip-path="url(#gridclip)" textLength="14.62" lengthAdjust="spacingAndGlyphs">13</text>
<text x="94.55" y="26.90" font-size="9.24" fill="#217346" textLength="12.90" lengthAdjust="spacingAndGlyphs">On</text>
<text x="1091.49" y="60.90" font-size="12.30" fill="#217346" stroke="#217346" stroke-width="0.5" textLength="34.84" lengthAdjust="spacingAndGlyphs">Share</text>
<text x="1167.35" y="60.90" font-size="12.30" fill="#217346" stroke="#217346" stroke-width="0.5" textLength="66.98" lengthAdjust="spacingAndGlyphs">Comments</text>
<text x="120.06" y="130.10" font-size="14.08" fill="#333333" font-weight="bold" textLength="8.55" lengthAdjust="spacingAndGlyphs">B</text>
<text x="346.50" y="89.20" font-size="11.20" fill="#333333" stroke="#333333" stroke-width="0.4" textLength="6.40" lengthAdjust="spacingAndGlyphs">x</text>
<text x="346.50" y="111.80" font-size="11.20" fill="#333333" stroke="#333333" stroke-width="0.4" textLength="6.40" lengthAdjust="spacingAndGlyphs">x</text>
<text x="353.69" y="92.90" font-size="6.12" fill="#2b88d8" font-weight="bold" textLength="3.78" lengthAdjust="spacingAndGlyphs">2</text>
<text x="353.69" y="104.50" font-size="5.83" fill="#2b88d8" font-weight="bold" textLength="3.78" lengthAdjust="spacingAndGlyphs">2</text>
<text x="647.40" y="115.20" font-size="17.00" fill="#3b3b3b" textLength="7.73" lengthAdjust="spacingAndGlyphs">$</text>
<text x="680.95" y="116.80" font-size="18.49" fill="#3b3b3b" textLength="15.78" lengthAdjust="spacingAndGlyphs">%</text>
<text x="652.78" y="132.50" font-size="8.39" fill="#3b3b3b" textLength="6.62" lengthAdjust="spacingAndGlyphs">.0</text>
<text x="646.15" y="140.70" font-size="8.25" fill="#3b3b3b" textLength="13.28" lengthAdjust="spacingAndGlyphs">.00</text>
<text x="668.05" y="132.50" font-size="8.39" fill="#3b3b3b" textLength="13.39" lengthAdjust="spacingAndGlyphs">.00</text>
<text x="672.46" y="140.70" font-size="8.25" fill="#3b3b3b" textLength="9.01" lengthAdjust="spacingAndGlyphs">.0</text>
<text x="1052.75" y="83.80" font-size="8.53" fill="#2b88d8" font-weight="bold" textLength="6.83" lengthAdjust="spacingAndGlyphs">A</text>
<text x="1052.56" y="92.80" font-size="8.96" fill="#333333" stroke="#333333" stroke-width="0.3" textLength="6.62" lengthAdjust="spacingAndGlyphs">Z</text>

</svg></body></html>
